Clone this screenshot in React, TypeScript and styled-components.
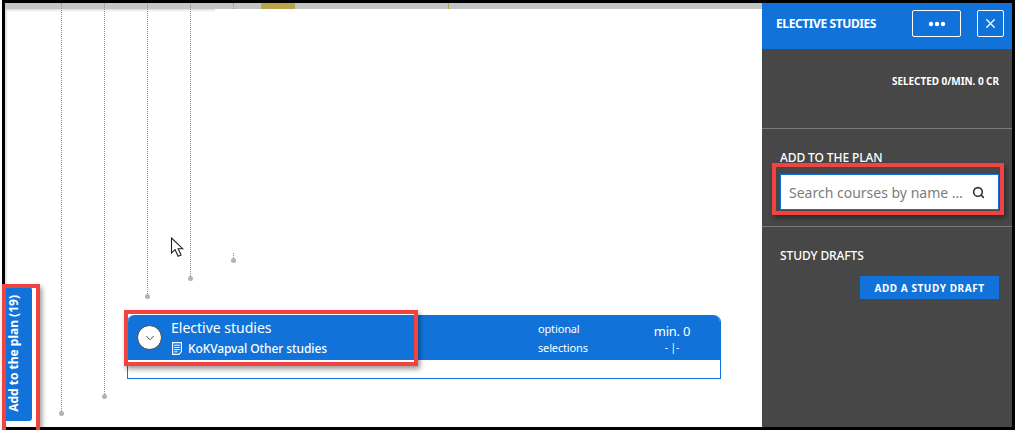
import React from 'react'
import styled, { createGlobalStyle } from 'styled-components'
import { X, Search, ChevronDown } from 'lucide-react'

const BLUE = '#1173d9'
const RED = '#f24343'

const GlobalStyle = createGlobalStyle`
  html, body {
    margin: 0;
    padding: 0;
    background: #fff;
    overflow: hidden;
  }
  * {
    box-sizing: border-box;
  }
  body {
    font-family: "Noto Sans", "Open Sans", sans-serif;
  }
`

const Shell = styled.div`
  position: relative;
  width: 1015px;
  height: 430px;
  padding-left: 2px;
  overflow: hidden;
`

const Frame = styled.div`
  display: flex;
  height: 100%;
  border: 3px solid #000;
`

const Main = styled.main`
  position: relative;
  flex: 1;
  display: flex;
  flex-direction: column;
  min-width: 0;
`

const Strip = styled.div`
  display: flex;
  height: 6px;
  flex-shrink: 0;
`

const StripPart = styled.div<{ $width?: number; $olive?: boolean }>`
  flex: ${({ $width }) => ($width ? `0 0 ${$width}px` : 1)};
  background: ${({ $olive }) => ($olive ? '#b8a44e' : '#c4c4c4')};
`

const StripShade = styled.div`
  width: 210px;
  height: 3px;
  flex-shrink: 0;
  background: linear-gradient(#dcdcdc, #fff);
`

const Canvas = styled.div`
  flex: 1;
  display: flex;
  align-items: flex-start;
  box-shadow: inset 3px 0 3px -2px #d0d0d0;
  margin-top: -3px;
`

const Connector = styled.div<{ $x: number; $top?: number; $end: number }>`
  position: absolute;
  left: ${({ $x }) => $x}px;
  top: ${({ $top }) => $top ?? 0}px;
  height: ${({ $end, $top }) => $end - ($top ?? 0)}px;
  border-left: 1px dotted #8f8f8f;
`

const Node = styled.span`
  position: absolute;
  left: -3px;
  bottom: -3px;
  width: 5px;
  height: 5px;
  border-radius: 50%;
  background: #b3b3b3;
`

const PlanTab = styled.button`
  flex: 0 0 27px;
  height: 134px;
  margin-top: 278px;
  padding: 0 10px 1px 0;
  display: flex;
  align-items: center;
  justify-content: center;
  border: 0;
  border-radius: 0 3px 3px 0;
  background: ${BLUE};
  color: #fff;
  font: 700 12px "Noto Sans", sans-serif;
  white-space: nowrap;

  span {
    writing-mode: vertical-rl;
    transform: rotate(180deg);
  }
`

const Card = styled.section`
  flex: 0 0 594px;
  height: 64px;
  margin: 306px 0 0 95px;
  display: flex;
  flex-direction: column;
  border: 1px solid ${BLUE};
  border-top: 0;
  border-radius: 7px 7px 0 0;
`

const CardHead = styled.header`
  height: 45px;
  display: flex;
  align-items: center;
  padding-left: 9px;
  background: ${BLUE};
  border-radius: 7px 7px 0 0;
  color: #fff;
`

const Toggle = styled.span`
  flex: 0 0 25px;
  height: 25px;
  display: flex;
  align-items: center;
  justify-content: center;
  border-radius: 50%;
  border: 1px solid #444;
  background: #fff;
  color: #333;
`

const Titles = styled.div`
  flex: 0 0 367px;
  margin-left: 9px;
  display: flex;
  flex-direction: column;
  gap: 2px;
`

const CardTitle = styled.div`
  font-size: 14px;
  line-height: 20px;
`

const CardCode = styled.div`
  display: flex;
  align-items: center;
  gap: 6px;
  font-size: 12px;
  font-weight: 500;
  line-height: 18px;
  letter-spacing: -0.1px;
  padding-left: 1px;
`

const Optional = styled.div`
  flex: 0 0 94px;
  font-size: 11px;
  line-height: 19px;
  letter-spacing: -0.15px;
`

const Credits = styled.div`
  flex: 0 0 80px;
  padding-top: 2px;
  text-align: center;
  display: flex;
  flex-direction: column;
`

const MinCredits = styled.div`
  font-size: 13px;
  line-height: 18px;
  letter-spacing: -0.2px;
`

const Grade = styled.div`
  font-size: 10px;
  line-height: 15px;
`

const Panel = styled.aside`
  flex: 0 0 250px;
  min-width: 0;
  display: flex;
  flex-direction: column;
  background: #474747;
  color: #fff;
`

const PanelHead = styled.header`
  height: 46px;
  flex-shrink: 0;
  display: flex;
  align-items: center;
  padding: 0 8px 5px 14px;
  background: ${BLUE};
`

const PanelTitle = styled.h2`
  flex: 1;
  margin: 0;
  font-size: 12px;
  font-weight: 700;
  letter-spacing: -0.4px;
  text-transform: uppercase;
`

const HeadButton = styled.button<{ $wide?: boolean }>`
  width: ${({ $wide }) => ($wide ? 49 : 27)}px;
  height: 27px;
  margin-left: ${({ $wide }) => ($wide ? 0 : 16)}px;
  padding: 0;
  display: flex;
  align-items: center;
  justify-content: center;
  background: transparent;
  border: 1px solid #fff;
  border-radius: 2px;
  color: #fff;
`

const Summary = styled.div`
  height: 80px;
  flex-shrink: 0;
  padding: 24px 13px 0 0;
  border-bottom: 1px solid #7a7a7a;
  text-align: right;
  font-size: 10px;
  font-weight: 700;
  line-height: 16px;
  letter-spacing: -0.05px;
  text-transform: uppercase;
`

const Section = styled.section`
  padding: 0 13px 0 18px;
  display: flex;
  flex-direction: column;
`

const PlanSection = styled(Section)`
  height: 98px;
  flex-shrink: 0;
  padding-top: 21px;
  border-bottom: 1px solid #7a7a7a;
`

const DraftSection = styled(Section)`
  padding-top: 21px;
`

const SectionLabel = styled.h3`
  margin: 0;
  font-size: 12px;
  font-weight: 500;
  line-height: 16px;
  letter-spacing: -0.1px;
  text-transform: uppercase;
`

const SearchBox = styled.div`
  height: 36px;
  margin-top: 8px;
  display: flex;
  align-items: center;
  padding: 0 13px 0 8px;
  background: #fff;
  border: 1px solid ${BLUE};
  color: #333;
`

const SearchInput = styled.input`
  flex: 1;
  width: 0;
  min-width: 0;
  margin-right: 4px;
  padding: 0;
  border: 0;
  outline: 0;
  background: transparent;
  font: 400 14px "Noto Sans", sans-serif;
  text-overflow: ellipsis;

  &::placeholder {
    color: #7d7d7d;
    opacity: 1;
  }
`

const DraftButton = styled.button`
  align-self: flex-end;
  width: 139px;
  height: 23px;
  margin-top: 12px;
  padding: 0;
  border: 0;
  background: ${BLUE};
  color: #fff;
  font: 700 10px "Noto Sans", sans-serif;
  letter-spacing: 0.55px;
  text-transform: uppercase;
`

const Highlight = styled.div<{ $x: number; $y: number; $w: number; $h: number }>`
  position: absolute;
  left: ${({ $x }) => $x}px;
  top: ${({ $y }) => $y}px;
  width: ${({ $w }) => $w}px;
  height: ${({ $h }) => $h}px;
  border: 4px solid ${RED};
  box-shadow: 2px 3px 5px rgba(0, 0, 0, 0.4);
  pointer-events: none;
`

const Cursor = styled.svg`
  position: absolute;
  left: 170px;
  top: 237px;
`

const connectors = [
  { x: 56, end: 410 },
  { x: 99, end: 393 },
  { x: 142, end: 293 },
  { x: 185, end: 275 },
]

const DocIcon = () => (
  <svg width="10" height="13" viewBox="0 0 10 13" fill="none" stroke="#fff">
    <path d="M.6.6h8.8v9L7 12.4H.6z" strokeWidth="1.1" />
    <path d="M2.2 3.2h5.6M2.2 5.4h5.6M2.2 7.6h5.6M2.2 9.8h3.4" strokeWidth="1" />
  </svg>
)

const DotsIcon = () => (
  <svg width="18" height="6" viewBox="0 0 18 6" fill="#fff">
    <circle cx="3" cy="3" r="2.2" />
    <circle cx="9" cy="3" r="2.2" />
    <circle cx="15" cy="3" r="2.2" />
  </svg>
)

const App: React.FC = () => (
  <Shell>
    <GlobalStyle />
    <Frame>
      <Main>
        <Strip>
          <StripPart $width={256} />
          <StripPart $width={34} $olive />
          <StripPart $width={153} />
          <StripPart $width={1} $olive />
          <StripPart />
        </Strip>
        <StripShade />
        <Canvas>
          <PlanTab>
            <span>Add to the plan (19)</span>
          </PlanTab>
          <Card>
            <CardHead>
              <Toggle>
                <ChevronDown size={14} strokeWidth={1.5} />
              </Toggle>
              <Titles>
                <CardTitle>Elective studies</CardTitle>
                <CardCode>
                  <DocIcon />
                  KoKVapval Other studies
                </CardCode>
              </Titles>
              <Optional>
                optional
                <br />
                selections
              </Optional>
              <Credits>
                <MinCredits>min. 0</MinCredits>
                <Grade>- |-</Grade>
              </Credits>
            </CardHead>
          </Card>
        </Canvas>
        {connectors.map((line) => (
          <Connector key={line.x} $x={line.x} $end={line.end}>
            <Node />
          </Connector>
        ))}
        <Connector $x={228} $end={6} />
        <Connector $x={228} $top={250} $end={257}>
          <Node />
        </Connector>
      </Main>
      <Panel>
        <PanelHead>
          <PanelTitle>Elective studies</PanelTitle>
          <HeadButton $wide aria-label="More">
            <DotsIcon />
          </HeadButton>
          <HeadButton aria-label="Close">
            <X size={15} strokeWidth={2} />
          </HeadButton>
        </PanelHead>
        <Summary>Selected 0/min. 0 cr</Summary>
        <PlanSection>
          <SectionLabel>Add to the plan</SectionLabel>
          <SearchBox>
            <SearchInput placeholder="Search courses by name or code" />
            <Search size={13} strokeWidth={3} />
          </SearchBox>
        </PlanSection>
        <DraftSection>
          <SectionLabel>Study drafts</SectionLabel>
          <DraftButton>Add a study draft</DraftButton>
        </DraftSection>
      </Panel>
    </Frame>
    <Cursor width="14" height="21" viewBox="0 0 14 21" fill="#fff" stroke="#222">
      <path d="M1.5 1v15l3.6-3.3 3 6.6 3-1.4-3-6.2h4.6z" strokeWidth="1.1" />
    </Cursor>
    <Highlight $x={2} $y={284} $w={38} $h={150} />
    <Highlight $x={124} $y={310} $w={294} $h={56} />
    <Highlight $x={772} $y={163} $w={232} $h={52} />
  </Shell>
)

export default App
